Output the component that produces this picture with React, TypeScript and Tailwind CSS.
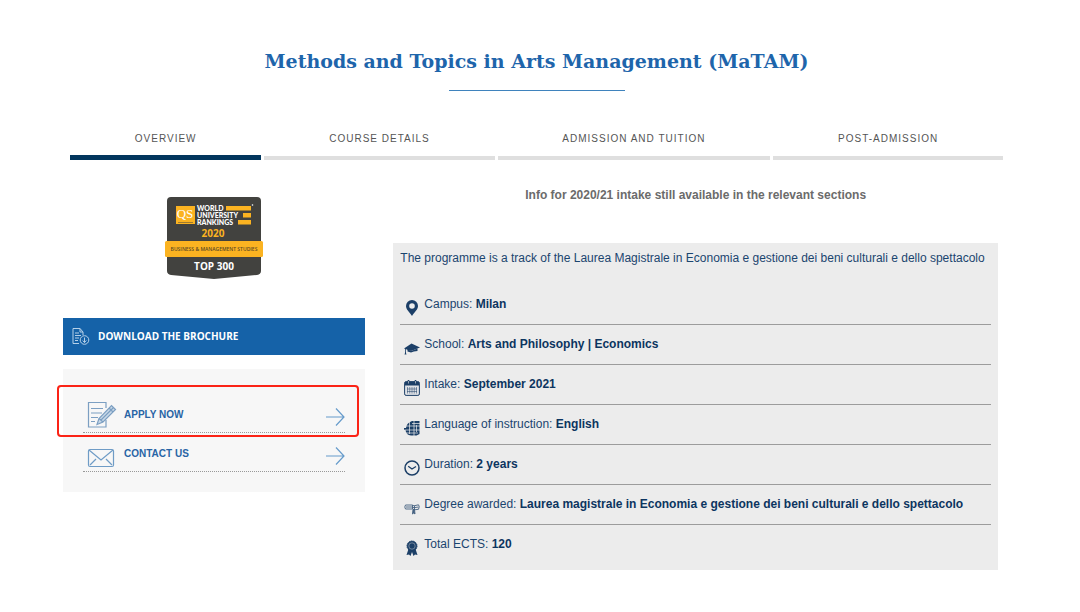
import type { ReactNode } from "react";

const TABS = ["Overview", "Course details", "Admission and tuition", "Post-admission"];

const ICONS: Record<string, ReactNode> = {
  pin: (
    <path
      fillRule="evenodd"
      d="M8 0a6 6 0 0 0-6 6c0 3.500 3.500 6 6 10 2.500-4 6-6.500 6-10a6 6 0 0 0-6-6Zm0 3.200a2.800 2.800 0 1 1 0 5.600 2.800 2.800 0 0 1 0-5.600Z"
    />
  ),
  cap: (
    <>
      <path d="M0 8.500 7.500 3.500 16 7.500 7 11Z" />
      <path d="M3.500 9 7 11l6.500-2.500v2.500q-4 0-6.500 1.500l-3.500-1Z" />
      <path d="M1.500 8.500v5" stroke="currentColor" strokeWidth=".8" fill="none" />
      <path d="m.5 14.500 1-3 1 3Z" />
    </>
  ),
  calendar: (
    <>
      <rect x=".6" y="1.600" width="14.800" height="13.800" rx="1.500" fill="#dfe2e6" stroke="currentColor" strokeWidth="1" />
      <path d="M1 2h14v3.500H1Z" />
      <path d="M4.500 0v3.500M11.500 0v3.500" stroke="currentColor" strokeWidth="1.600" />
      <path d="M4.500 1v2.500M11.500 1v2.500" stroke="#ececec" strokeWidth=".6" />
      <path d="M3.500 7v6.500m2.250-6.500v6.500m2.250-6.500v6.500m2.250-6.500v6.500m2.250-6.500v6.500M3 9h10m-10 2.500h10" fill="none" stroke="currentColor" strokeWidth=".5" />
    </>
  ),
  globe: (
    <>
      <path d="M15.500 1v13l-3 1.500H7Q2 15 1.500 10H0V8h2q.5-5 6-7Z" />
      <path d="M0 10h16M2 6h14M2 13h12M5.500 2v12M10 1v15M8 3.500h8M12.500 12V5" fill="none" stroke="#ececec" strokeWidth=".7" />
    </>
  ),
  clock: (
    <>
      <circle cx="8" cy="8" r="7" fill="none" stroke="currentColor" strokeWidth="1.500" />
      <path d="M4.200 6.200 8 9l4-2.500" fill="none" stroke="currentColor" strokeWidth="1.300" />
    </>
  ),
  diploma: (
    <g opacity=".8" fill="none" stroke="currentColor" strokeWidth=".9">
      <path d="M1.500 5H8l2 .800 4.500-1q1.500 1.500 0 4.500l-4 .500L8.500 9h-7q-1.500-2 0-4Z" />
      <path d="M2 7h6l2 .700L14.500 7M8.500 5v4M10.500 6v4" />
      <path d="M9 9.500 8.500 14l1.200-1 1.300 1-.500-4.500Z" fill="currentColor" />
    </g>
  ),
  ribbon: (
    <>
      <path d="m4.500 9-2 6 2.500-.500L6.500 16 8 12l1.500 4 1.500-1.500 2.500.500-2-6Z" />
      <circle cx="8" cy="6" r="5" stroke="currentColor" strokeDasharray="1.500 .7" />
      <circle cx="8" cy="6" r="3.200" fill="none" stroke="#ececec" strokeWidth=".4" />
    </>
  ),
};

const FACTS = [
  { icon: "pin", label: "Campus", value: "Milan" },
  { icon: "cap", label: "School", value: "Arts and Philosophy | Economics" },
  { icon: "calendar", label: "Intake", value: "September 2021" },
  { icon: "globe", label: "Language of instruction", value: "English" },
  { icon: "clock", label: "Duration", value: "2 years" },
  { icon: "diploma", label: "Degree awarded", value: "Laurea magistrale in Economia e gestione dei beni culturali e dello spettacolo" },
  { icon: "ribbon", label: "Total ECTS", value: "120" },
];

function RankingBadge() {
  return (
    <svg width="100" height="84" viewBox="0 0 100 84" className="font-['Open_Sans',sans-serif]">
      <path d="M7 1h86q4 0 4 4v70q0 3-4 4L50 83 7 79q-4-1-4-4V5q0-4 4-4Z" fill="#42423f" />
      <rect x="12" y="10" width="19" height="18" fill="#fbb321" />
      <path d="M14 26.500h15" stroke="#42423f" strokeWidth=".5" />
      <text x="21" y="22" textAnchor="middle" fontSize="13" fill="#fff" className="font-['Liberation_Serif',serif]">QS</text>
      <g fill="#fff" fontSize="7" fontWeight="900" className="font-[Lato,sans-serif]">
        <text x="33" y="15">WORLD</text>
        <text x="33" y="22">UNIVERSITY</text>
        <text x="33" y="29">RANKINGS</text>
      </g>
      <path d="M62 10h25v4.500H62ZM79 17h8v4.500h-8ZM74 24h13v4.500H74Z" fill="#fbb321" />
      <circle cx="88.500" cy="9" r=".8" fill="#fff" />
      <text x="49" y="41" textAnchor="middle" fontSize="10" fontWeight="700" fill="#fbb321">2020</text>
      <rect x="1" y="45" width="98" height="16" rx="1.500" fill="#fbb321" />
      <text x="50" y="55" textAnchor="middle" fontSize="5" fontWeight="600" fill="#5b4a25">BUSINESS &amp; MANAGEMENT STUDIES</text>
      <text x="50" y="74" textAnchor="middle" fontSize="10" fontWeight="700" fill="#fff">TOP 300</text>
    </svg>
  );
}

function Arrow() {
  return (
    <svg width="20" height="20" viewBox="0 0 20 20" className="mt-1 ml-auto" fill="none" stroke="#669bcb" strokeWidth="1.200">
      <path d="M1 10h18M11 1.500l8 8.500-8 8.500" />
    </svg>
  );
}

function ApplyIcon() {
  return (
    <svg width="30" height="28" viewBox="0 0 30 28" fill="none" stroke="#7c9fc2" strokeWidth="1.200">
      <path d="M19 7V1.500H1.500v24.500H19v-7" />
      <path d="M4 7.500h12M4 12h11M4 16.500h7M4 20.500h4" />
      <path d="m10 23.500 2-6L24.500 4.500l4 4L16 21Z" fill="#c9d9e8" />
      <path d="m12 17.500 4 3.500M22 7l4 4M14 19l12.500-12.500" />
    </svg>
  );
}

function MailIcon() {
  return (
    <svg width="30" height="20" viewBox="0 0 30 20" fill="none" stroke="#6f9cc6" strokeWidth="1.200">
      <rect x="1.500" y="1.500" width="25" height="17" rx="1.500" />
      <path d="m2 2 12 10L26 2M3 17l6-6M25 17l-6-6" />
    </svg>
  );
}

export default function App() {
  return (
    <div className="bg-white pb-10 pl-[63px] pr-[82px] pt-[49px] font-['Liberation_Sans',Arial,sans-serif] text-xs text-[#1b456f]">
      <header className="-mr-3 flex flex-col items-center">
        <h1 className="text-center font-['DejaVu_Serif',Georgia,serif] text-[19px] leading-6 font-bold text-[#1e65ab]">
          Methods and Topics in Arts Management (MaTAM)
        </h1>
        <div className="mt-[17px] h-px w-44 bg-[#3f83bd]" />
      </header>

      <nav className="-mr-[5px] ml-[7px] mt-10 flex gap-[3px]">
        {TABS.map((tab, i) => (
          <a
            key={tab}
            href="#"
            aria-current={i === 0 ? "page" : undefined}
            className={`flex h-[29px] flex-auto justify-center text-[10px] leading-4 tracking-[1px] text-[#555] uppercase ${
              i === 0 ? "border-b-[5px] border-[#02365d]" : "border-b-4 border-[#dfdfdf]"
            }`}
          >
            {tab}
          </a>
        ))}
      </nav>

      <div className="grid grid-cols-[1fr_2fr] gap-7">
        <aside className="pt-9">
          <div className="flex justify-center">
            <RankingBadge />
          </div>
          <a href="#" className="mt-[38px] flex h-[37px] items-center gap-2 bg-[#1562a8] px-2 font-['Open_Sans',sans-serif] text-[10px] font-bold text-white">
            <svg width="19" height="19" viewBox="0 0 19 19" fill="none" stroke="#b5d0e8" strokeWidth="1">
              <path d="M8 16.500H2v-15h7l3 3.500v3M9 1.500V5h3M4 6h4M4 8.500h6M4 11h4M4 13.500h3" />
              <circle cx="13.500" cy="13" r="4.300" />
              <path d="M13.500 10.500v5M11.700 13.500l1.800 2 1.800-2" />
            </svg>
            DOWNLOAD THE BROCHURE
          </a>

          <div className="relative mt-3.5 h-[123px] bg-[#f7f7f7] px-5 pt-6 text-[10px] font-bold text-[#2864a5]">
            <a href="#" className="flex h-10 items-center border-b border-dotted border-[#999] pt-1 pl-1">
              <span className="w-[37px]"><ApplyIcon /></span>
              APPLY NOW
              <Arrow />
            </a>
            <a href="#" className="flex h-[39px] items-center border-b border-dotted border-[#999] pt-1 pl-1">
              <span className="mt-2 w-[37px]"><MailIcon /></span>
              CONTACT US
              <Arrow />
            </a>
            {/* highlight frame around the first link */}
            <div className="pointer-events-none absolute -left-1.5 right-1.5 top-4 h-[52px] rounded-sm border-2 border-[#fb2316]" />
          </div>
        </aside>

        <section className="pt-[27px]">
          <p className="text-center font-bold leading-4 text-[#6b6b6b]">
            Info for 2020/21 intake still available in the relevant sections
          </p>
          <div className="mt-10 bg-[#ececec] px-[7px] pb-[5px] pt-[7px]">
            <p className="leading-4">
              The programme is a track of the Laurea Magistrale in Economia e gestione dei beni culturali e dello spettacolo
            </p>
            <ul className="mt-[19px]">
              {FACTS.map(({ icon, label, value }) => (
                <li key={label} className="flex h-10 items-center border-b border-[#9c9c9c] pb-0.5 last:border-b-0">
                  <svg width="16" height="16" viewBox="0 0 16 16" className="mr-1 ml-1 mt-2 shrink-0 text-[#1c3f67]" fill="currentColor">
                    {ICONS[icon]}
                  </svg>
                  <span>
                    {label}: <strong className="text-[#0c3560]">{value}</strong>
                  </span>
                </li>
              ))}
            </ul>
          </div>
        </section>
      </div>
    </div>
  );
}
